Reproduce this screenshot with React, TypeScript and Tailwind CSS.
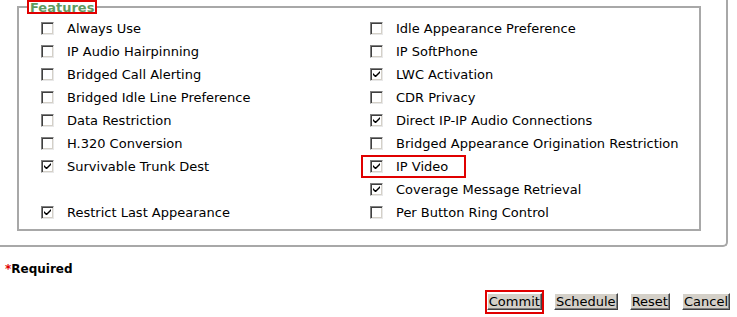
import React from "react";

type Feature = { label: string; checked: boolean; mark?: boolean } | null;

const left: Feature[] = [
  { label: "Always Use", checked: false },
  { label: "IP Audio Hairpinning", checked: false },
  { label: "Bridged Call Alerting", checked: false },
  { label: "Bridged Idle Line Preference", checked: false },
  { label: "Data Restriction", checked: false },
  { label: "H.320 Conversion", checked: false },
  { label: "Survivable Trunk Dest", checked: true },
  null,
  { label: "Restrict Last Appearance", checked: true },
];

const right: Feature[] = [
  { label: "Idle Appearance Preference", checked: false },
  { label: "IP SoftPhone", checked: false },
  { label: "LWC Activation", checked: true },
  { label: "CDR Privacy", checked: false },
  { label: "Direct IP-IP Audio Connections", checked: true },
  { label: "Bridged Appearance Origination Restriction", checked: false },
  { label: "IP Video", checked: true, mark: true },
  { label: "Coverage Message Retrieval", checked: true },
  { label: "Per Button Ring Control", checked: false },
];

function Box({ checked }: { checked: boolean }) {
  return (
    <span className="flex h-[13px] w-[13px] shrink-0 items-center justify-center border border-t-[#808080] border-l-[#808080] border-r-[#e8e8e8] border-b-[#e8e8e8] bg-white shadow-[inset_1px_1px_0_#404040,inset_-1px_-1px_0_#d4d0c8]">
      {checked && (
        <svg width="7" height="7" viewBox="0 0 7 7">
          <path d="M0 2 L0 4 L2 6 L3 6 L7 2 L7 0 L3 4 L2 4 Z" fill="#000" />
        </svg>
      )}
    </span>
  );
}

function Item({ f }: { f: Feature }) {
  if (!f) return <div className="h-[23px]" />;
  return (
    <div className="flex h-[23px] items-center">
      <div
        className={
          f.mark
            ? "-ml-[9px] flex h-[23px] w-[105px] items-center gap-[13px] border-2 border-[#e00000] pl-[7px]"
            : "flex items-center gap-[13px]"
        }
      >
        <Box checked={f.checked} />
        <span className="whitespace-nowrap">{f.label}</span>
      </div>
    </div>
  );
}

function Btn({ label, mark }: { label: string; mark?: boolean }) {
  return (
    <div className={mark ? "border-2 border-[#e00000]" : "border-2 border-transparent"}>
      <button className="h-[17px] border border-t-white border-l-white border-r-[#404040] border-b-[#404040] bg-[#d4d0c8] px-[1px] text-[13px] leading-[15px] text-black shadow-[inset_-1px_-1px_0_#808080]">
        {label}
      </button>
    </div>
  );
}

export default function App() {
  return (
    <div className="h-[317px] w-[737px] bg-white text-[13px] text-black font-['DejaVu_Sans',Verdana,sans-serif]">
      <div className="h-[247px] w-[728px] rounded-br-[5px] border-r-2 border-b-2 border-[#a8a8a8] pl-[17px] pr-[25px]">
        <fieldset className="h-[231px] border-2 border-[#a8a8a8] pl-[22px]">
          <legend className="-ml-[14px] border-2 border-[#e00000] px-[1px] text-[13px] leading-[10px] font-bold text-[#5f9a5f]">
            <span className="relative top-[1px]">Features</span>
          </legend>
          <div className="grid grid-cols-[329px_1fr] pt-[3px]">
            <div>
              {left.map((f, i) => (
                <Item key={i} f={f} />
              ))}
            </div>
            <div>
              {right.map((f, i) => (
                <Item key={i} f={f} />
              ))}
            </div>
          </div>
        </fieldset>
      </div>
      <div className="mt-[13px] pl-[5px] text-[12px] font-bold">
        <span className="text-[#e00000]">*</span>Required
      </div>
      <div className="mt-[12px] flex justify-end gap-[8px] pr-[5px]">
        <Btn label="Commit" mark />
        <Btn label="Schedule" />
        <Btn label="Reset" />
        <Btn label="Cancel" />
      </div>
    </div>
  );
}
